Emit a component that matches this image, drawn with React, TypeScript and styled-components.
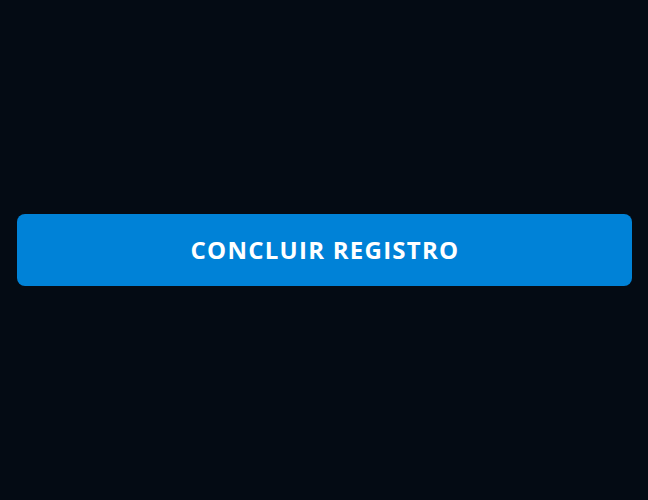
import React from "react";
import styled, { createGlobalStyle } from "styled-components";

const Global = createGlobalStyle`
  html, body { margin: 0; padding: 0; background: #040b14; }
  #root { min-height: 100vh; }
`;

const Page = styled.div`
  min-height: 100vh;
  display: flex;
  align-items: center;
  padding: 0 16px 0 17px;
  box-sizing: border-box;
  background: #040b14;
`;

const Button = styled.button`
  width: 100%;
  height: 72px;
  padding: 0 0 1px 1px;
  border: none;
  border-radius: 8px;
  background: #0082d7;
  color: #ffffff;
  font-family: "Open Sans", "Liberation Sans", sans-serif;
  font-weight: 700;
  font-size: 24px;
  letter-spacing: 1.25px;
  text-transform: uppercase;
  cursor: pointer;
`;

export default function App() {
  return (
    <>
      <Global />
      <Page>
        <Button>Concluir registro</Button>
      </Page>
    </>
  );
}
